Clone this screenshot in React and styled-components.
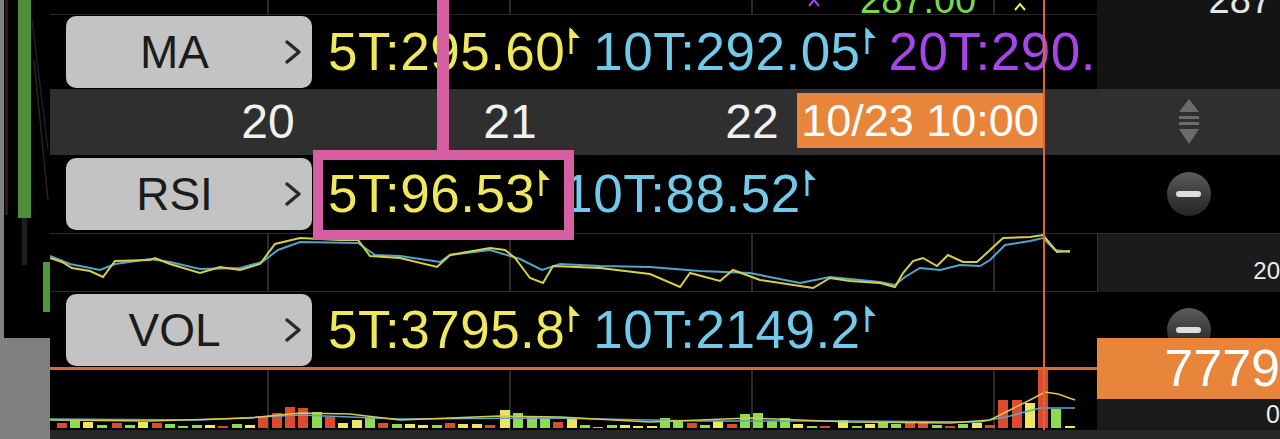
import React from 'react';
import styled, { createGlobalStyle, css } from 'styled-components';

const GlobalStyle = createGlobalStyle`
  html, body {
    margin: 0;
    padding: 0;
    background: #000;
  }
  body {
    font-family: "Liberation Sans", Arial, sans-serif;
    overflow: hidden;
  }
`;

const YELLOW = '#efe85e';
const CYAN = '#72c9ea';
const PURPLE = '#a646ea';
const PINK = '#d65fa3';
const ORANGE = '#e8853b';
const BAR = { r: '#dc4a30', g: '#8ddc4e', y: '#ebe65a' };

// chart cells start at x=50 on the page, so points below are page coords
const X0 = 50;

const rsiYellow = [
  [50, 258], [62, 262], [72, 268], [90, 271], [103, 277], [115, 261], [150, 260], [155, 258],
  [170, 264], [200, 273], [220, 267], [240, 270], [260, 264], [275, 244], [300, 238], [340, 240],
  [358, 240], [370, 256], [400, 258], [437, 267], [450, 255], [490, 248], [505, 250], [515, 258],
  [530, 278], [543, 283], [553, 266], [600, 268], [650, 274], [680, 287], [690, 273], [720, 281],
  [733, 270], [760, 280], [813, 288], [830, 278], [850, 281], [880, 283], [895, 287], [903, 273],
  [913, 261], [923, 258], [937, 266], [948, 255], [963, 262], [977, 262], [990, 250], [1003, 238],
  [1030, 237], [1043, 235], [1057, 252], [1070, 251],
];

const rsiBlue = [
  [50, 256], [70, 264], [100, 270], [115, 264], [150, 259], [170, 262], [200, 269], [240, 268],
  [262, 262], [278, 250], [300, 242], [358, 243], [375, 255], [400, 256], [440, 262], [450, 255],
  [490, 250], [520, 259], [542, 270], [560, 264], [600, 266], [650, 267], [700, 271], [750, 273],
  [800, 283], [830, 277], [880, 282], [895, 285], [905, 277], [920, 268], [940, 270], [960, 265],
  [980, 266], [990, 260], [1005, 245], [1030, 241], [1043, 238], [1055, 250], [1070, 252],
];

const volBars = [
  [57, 423, 'r'], [70, 420, 'g'], [83, 422, 'y'], [97, 425, 'g'], [112, 423, 'r'], [125, 425, 'g'],
  [138, 422, 'y'], [152, 423, 'r'], [165, 424, 'g'], [178, 426, 'g'], [192, 425, 'g'], [205, 425, 'y'],
  [218, 426, 'r'], [232, 424, 'g'], [245, 425, 'y'], [258, 417, 'r'], [272, 413, 'r'], [285, 407, 'r'],
  [298, 408, 'r'], [312, 412, 'g'], [325, 417, 'r'], [338, 423, 'y'], [352, 420, 'y'], [365, 417, 'g'],
  [378, 423, 'r'], [392, 424, 'g'], [405, 424, 'y'], [418, 425, 'y'], [432, 425, 'g'], [445, 423, 'r'],
  [458, 424, 'y'], [472, 424, 'y'], [485, 425, 'r'], [500, 410, 'y'], [513, 413, 'g'], [527, 416, 'g'],
  [540, 419, 'g'], [553, 422, 'r'], [567, 418, 'y'], [580, 425, 'g'], [593, 427, 'g'], [607, 425, 'g'],
  [620, 425, 'y'], [633, 426, 'y'], [647, 426, 'y'], [660, 418, 'g'], [673, 420, 'g'], [687, 423, 'r'],
  [700, 425, 'g'], [713, 421, 'y'], [727, 424, 'r'], [740, 414, 'g'], [753, 413, 'g'], [767, 421, 'g'],
  [780, 418, 'g'], [793, 424, 'y'], [807, 426, 'g'], [820, 426, 'r'], [838, 420, 'y'], [852, 426, 'g'],
  [865, 424, 'y'], [878, 423, 'g'], [891, 424, 'g'], [905, 423, 'r'], [918, 423, 'r'], [932, 425, 'g'],
  [945, 426, 'r'], [958, 424, 'g'], [972, 423, 'y'], [985, 425, 'r'], [998, 400, 'r'], [1012, 400, 'r'],
  [1025, 403, 'y'], [1038, 368, 'r'], [1051, 409, 'g'], [1065, 426, 'y'],
];

const volYellow = [
  [50, 420], [150, 421], [250, 418], [300, 413], [350, 414], [400, 420], [500, 416], [560, 417],
  [650, 422], [750, 418], [850, 422], [950, 423], [990, 420], [1010, 410], [1030, 400], [1045, 392],
  [1058, 394], [1075, 400],
];

const volBlue = [
  [50, 419], [200, 420], [300, 415], [400, 419], [550, 418], [700, 421], [850, 421], [980, 422],
  [1010, 416], [1040, 408], [1075, 408],
];

const toPoints = (list, top) => list.map(([x, y]) => `${x - X0},${y - top}`).join(' ');

const Screen = styled.div`
  display: flex;
  width: 1280px;
  height: 439px;
  overflow: hidden;
`;

const SideStrip = styled.div`
  width: 50px;
  flex: none;
  display: flex;
  flex-direction: column;
`;

const SideChart = styled.div`
  height: 338px;
  border-left: 4px solid #818181;
  background: #000;

  svg {
    display: block;
  }
`;

const SideBlock = styled.div`
  flex: 1;
  background: #808080;
`;

const Board = styled.div`
  position: relative;
  flex: 1;
  display: flex;
  flex-direction: column;
`;

const Row = styled.div`
  display: grid;
  grid-template-columns: 1047px 183px;
  height: ${(p) => p.$h}px;
  flex: none;
`;

const gridLines = css`
  background-image: linear-gradient(90deg, #2a2a2a 0 2px, transparent 2px);
  background-size: 242px 100%;
  background-position: 217px 0;
`;

const Plot = styled.div`
  background-color: ${(p) => p.$bg || '#000'};
  overflow: ${(p) => (p.$clip ? 'hidden' : 'visible')};
  ${(p) => p.$grid && gridLines}

  svg {
    display: block;
  }
`;

const Axis = styled.div`
  position: relative;
  display: flex;
  align-items: ${(p) => p.$align || 'center'};
  justify-content: ${(p) => p.$justify || 'center'};
  background: ${(p) => p.$bg || '#000'};
  overflow: ${(p) => (p.$clip ? 'hidden' : 'visible')};
`;

const TopPlot = styled(Plot)`
  display: flex;
  align-items: flex-end;
  padding-left: 758px;
  border-bottom: 1px solid #262626;
  box-sizing: border-box;

  svg {
    align-self: flex-start;
    flex: none;
  }
`;

const PriceMark = styled.span`
  margin: 0 38px 0 40px;
  font-size: 38px;
  line-height: 38px;
  color: #79d94c;
  transform: translateY(5px);
`;

const AxisPrice = styled.span`
  font-size: 38px;
  line-height: 38px;
  color: #e6e6e6;
  padding-right: 8px;
  transform: translateY(4px);
`;

const IndicatorBar = styled(Plot)`
  display: flex;
  align-items: center;
  gap: 16px;
  padding-left: 16px;
  white-space: nowrap;
`;

const ToggleButton = styled.div`
  flex: none;
  display: flex;
  align-items: center;
  width: 246px;
  height: 72px;
  padding-right: 9px;
  box-sizing: border-box;
  border-radius: 10px;
  background: #c3c3c3;
  color: #1b1b1b;

  svg {
    flex: none;
  }
`;

const ToggleLabel = styled.span`
  flex: 1;
  text-align: center;
  font-size: 46px;
  line-height: 72px;
`;

const ValueList = styled.div`
  display: flex;
  align-items: center;
  gap: 12px;
`;

const Value = styled.span`
  display: inline-flex;
  align-items: flex-start;
  gap: 3px;
  color: ${(p) => p.$c};
  font-size: 53px;
  line-height: 60px;
  letter-spacing: 0.5px;

  svg {
    margin-top: 5px;
    flex: none;
  }
`;

const Highlight = styled.span`
  position: relative;
  z-index: 2;
  display: inline-flex;

  &::after {
    content: '';
    position: absolute;
    left: -15px;
    right: -23px;
    top: -14px;
    bottom: -16px;
    border: 10px solid ${PINK};
  }

  &::before {
    content: '';
    position: absolute;
    left: 109px;
    width: 12px;
    top: -180px;
    height: 166px;
    background: ${PINK};
  }
`;

const DateAxis = styled(Plot)`
  position: relative;
  display: flex;
  padding-left: 97px;
`;

const Tick = styled.span`
  flex: none;
  width: 242px;
  text-align: center;
  font-size: 48px;
  line-height: 66px;
  color: #f1f1f1;
`;

const DateTag = styled.div`
  position: absolute;
  left: 747px;
  top: 4px;
  width: 246px;
  height: 55px;
  background: ${ORANGE};
  color: #fff;
  font-size: 45px;
  line-height: 55px;
  text-align: center;
`;

const MinusButton = styled.div`
  width: 44px;
  height: 44px;
  border-radius: 50%;
  background: linear-gradient(180deg, #5c5c5c 0%, #3a3a3a 55%, #262626 100%);
  display: flex;
  align-items: center;
  justify-content: center;

  &::after {
    content: '';
    width: 25px;
    height: 6px;
    border-radius: 3px;
    background: #dedede;
  }
`;

const ScaleLabel = styled.span`
  font-size: ${(p) => p.$size}px;
  line-height: ${(p) => p.$size}px;
  color: #ececec;
  padding-bottom: ${(p) => p.$pb}px;
`;

const FramedAxis = styled(Axis)`
  border-left: 1px solid #333;
  border-top: 1px solid #2c2c2c;
  box-sizing: border-box;
`;

const VolPlot = styled(Plot)`
  border-top: 3px solid #dc6a30;
  box-sizing: border-box;
`;

const ValueTag = styled.div`
  position: absolute;
  left: 0;
  right: 0;
  top: -29px;
  height: 61px;
  background: ${ORANGE};
  color: #fff;
  font-size: 52px;
  line-height: 61px;
  text-align: right;
`;

const BottomStrip = styled.div`
  height: 9px;
  flex: none;
  background: #262626;
`;

const Crosshair = styled.div`
  position: absolute;
  z-index: 3;
  left: 993px;
  top: 0;
  width: 2px;
  height: 430px;
  background: #e2652f;
`;

function Harpoon({ color }) {
  return (
    <svg width="13" height="28" viewBox="0 0 13 28">
      <path d="M3 27V2" stroke={color} strokeWidth="3" />
      <path d="M1.5 0L12 11H1.5Z" fill={color} />
    </svg>
  );
}

function Chevron() {
  return (
    <svg width="20" height="30" viewBox="0 0 20 30">
      <polyline
        points="4,5 16,15 4,25"
        fill="none"
        stroke="#2a2a2a"
        strokeWidth="3.5"
        strokeLinecap="round"
        strokeLinejoin="round"
      />
    </svg>
  );
}

function Caret({ color, top }) {
  return (
    <svg width="12" height="15" viewBox="0 0 12 15">
      <polyline points={`1,${top + 6} 6,${top} 11,${top + 6}`} fill="none" stroke={color} strokeWidth="2" />
    </svg>
  );
}

function SortIcon() {
  return (
    <svg width="22" height="46" viewBox="0 0 22 46">
      <path d="M11 0L21 13H1Z" fill="#6c6c6c" />
      <rect x="1" y="17" width="20" height="3" fill="#6c6c6c" />
      <rect x="1" y="23" width="20" height="3" fill="#6c6c6c" />
      <path d="M1 30H21L11 45Z" fill="#6c6c6c" />
    </svg>
  );
}

function Indicator({ name, values, highlightFirst, clip }) {
  return (
    <IndicatorBar $clip={clip}>
      <ToggleButton>
        <ToggleLabel>{name}</ToggleLabel>
        <Chevron />
      </ToggleButton>
      <ValueList>
        {values.map((v, i) => {
          const item = (
            <Value key={v.text} $c={v.color}>
              {v.text}
              {v.arrow !== false && <Harpoon color={v.color} />}
            </Value>
          );
          return i === 0 && highlightFirst ? <Highlight key={v.text}>{item}</Highlight> : item;
        })}
      </ValueList>
    </IndicatorBar>
  );
}

export default function App() {
  return (
    <Screen>
      <GlobalStyle />
      <SideStrip>
        <SideChart>
          <svg width="46" height="338">
            <rect x="1" y="0" width="3" height="215" fill="#3a1515" />
            <line x1="28" y1="20" x2="44" y2="150" stroke="#1c1c38" strokeWidth="1.5" />
            <line x1="30" y1="60" x2="44" y2="200" stroke="#2a2410" strokeWidth="1.5" />
            <rect x="14" y="0" width="13" height="218" fill="#4f8d3c" />
            <rect x="18" y="218" width="5" height="47" fill="#1f1f1f" />
            <rect x="39" y="262" width="7" height="50" fill="#4f963c" />
          </svg>
        </SideChart>
        <SideBlock />
      </SideStrip>

      <Board>
        <Row $h={15}>
          <TopPlot $grid $clip>
            <Caret color={PURPLE} top={0} />
            <PriceMark>287.00</PriceMark>
            <Caret color={YELLOW} top={4} />
          </TopPlot>
          <Axis $bg="#141414" $justify="flex-end" $align="flex-end" $clip>
            <AxisPrice>287</AxisPrice>
          </Axis>
        </Row>

        <Row $h={74}>
          <Indicator
            name="MA"
            clip
            values={[
              { text: '5T:295.60', color: YELLOW },
              { text: '10T:292.05', color: CYAN },
              { text: '20T:290.', color: PURPLE, arrow: false },
            ]}
          />
          <Axis $bg="#141414" />
        </Row>

        <Row $h={66}>
          <DateAxis $bg="#2f2f2f">
            <Tick>20</Tick>
            <Tick>21</Tick>
            <Tick>22</Tick>
            <DateTag>10/23 10:00</DateTag>
          </DateAxis>
          <Axis $bg="#2f2f2f">
            <SortIcon />
          </Axis>
        </Row>

        <Row $h={78}>
          <Indicator
            name="RSI"
            highlightFirst
            values={[
              { text: '5T:96.53', color: YELLOW },
              { text: '10T:88.52', color: CYAN },
            ]}
          />
          <Axis>
            <MinusButton />
          </Axis>
        </Row>

        <Row $h={59}>
          <Plot $grid>
            <svg width="1047" height="59">
              <line x1="0" y1="0.5" x2="1047" y2="0.5" stroke="#2c2c2c" />
              <line x1="0" y1="58.5" x2="1047" y2="58.5" stroke="#2c2c2c" />
              <polyline points={toPoints(rsiBlue, 233)} fill="none" stroke="#4fa6cc" strokeWidth="2" />
              <polyline points={toPoints(rsiYellow, 233)} fill="none" stroke="#d9cf45" strokeWidth="2" />
            </svg>
          </Plot>
          <FramedAxis $bg="#1b1b1b" $justify="flex-end" $align="flex-end">
            <ScaleLabel $size={24} $pb={9}>20</ScaleLabel>
          </FramedAxis>
        </Row>

        <Row $h={75}>
          <Indicator
            name="VOL"
            values={[
              { text: '5T:3795.8', color: YELLOW },
              { text: '10T:2149.2', color: CYAN },
            ]}
          />
          <Axis>
            <MinusButton />
          </Axis>
        </Row>

        <Row $h={63}>
          <VolPlot $grid>
            <svg width="1047" height="60">
              {volBars.map(([x, top, c]) => (
                <rect key={x} x={x - X0} y={top - 370} width="10" height={428 - top} fill={BAR[c]} />
              ))}
              <polyline points={toPoints(volBlue, 370)} fill="none" stroke="#5aa8cc" strokeWidth="1.5" />
              <polyline points={toPoints(volYellow, 370)} fill="none" stroke="#d8c850" strokeWidth="1.5" />
            </svg>
          </VolPlot>
          <Axis $bg="#1a1a1a" $justify="flex-end" $align="flex-end">
            <ValueTag>7779</ValueTag>
            <ScaleLabel $size={25} $pb={3}>0</ScaleLabel>
          </Axis>
        </Row>

        <BottomStrip />
        <Crosshair />
      </Board>
    </Screen>
  );
}
